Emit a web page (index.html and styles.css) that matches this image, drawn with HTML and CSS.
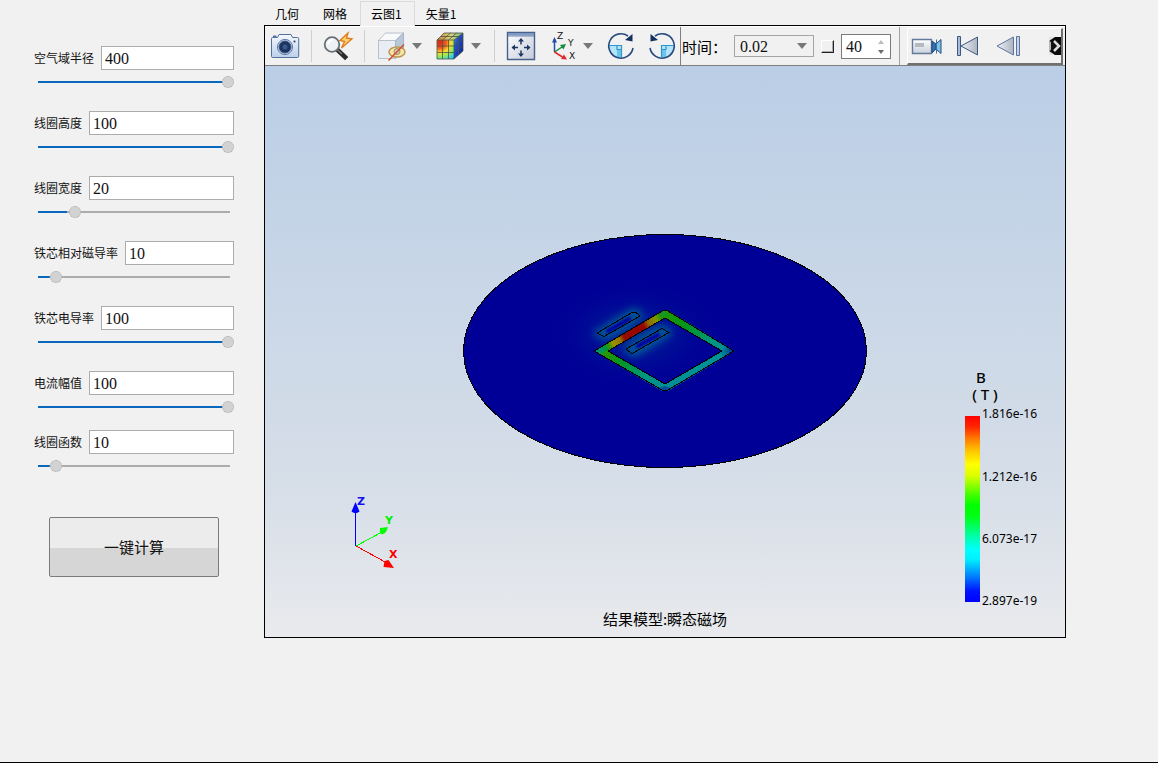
FILE: index.html
```html
<!DOCTYPE html>
<html lang="zh-CN">
<head>
<meta charset="utf-8">
<title>瞬态磁场</title>
<link rel="stylesheet" href="styles.css">
</head>
<body>
<div class="app">
  <form class="params">
    <div class="param">
      <div class="row"><label for="p1">空气域半径</label><input class="value" id="p1" type="text" value="400"></div>
      <input class="slider" type="range" aria-label="空气域半径" min="4" max="400" value="400" style="--fill:100%">
    </div>
    <div class="param">
      <div class="row"><label for="p2">线圈高度</label><input class="value" id="p2" type="text" value="100"></div>
      <input class="slider" type="range" aria-label="线圈高度" min="4" max="100" value="100" style="--fill:100%">
    </div>
    <div class="param">
      <div class="row"><label for="p3">线圈宽度</label><input class="value" id="p3" type="text" value="20"></div>
      <input class="slider" type="range" aria-label="线圈宽度" min="4" max="100" value="20" style="--fill:17%">
    </div>
    <div class="param">
      <div class="row"><label for="p4">铁芯相对磁导率</label><input class="value" id="p4" type="text" value="10"></div>
      <input class="slider" type="range" aria-label="铁芯相对磁导率" min="4" max="100" value="10" style="--fill:8%">
    </div>
    <div class="param">
      <div class="row"><label for="p5">铁芯电导率</label><input class="value" id="p5" type="text" value="100"></div>
      <input class="slider" type="range" aria-label="铁芯电导率" min="4" max="100" value="100" style="--fill:100%">
    </div>
    <div class="param param-tight">
      <div class="row"><label for="p6">电流幅值</label><input class="value" id="p6" type="text" value="100"></div>
      <input class="slider" type="range" aria-label="电流幅值" min="4" max="100" value="100" style="--fill:100%">
    </div>
    <div class="param param-last">
      <div class="row"><label for="p7">线圈函数</label><input class="value" id="p7" type="text" value="10"></div>
      <input class="slider" type="range" aria-label="线圈函数" min="4" max="100" value="10" style="--fill:8%">
    </div>
    <button class="run" type="button">一键计算</button>
  </form>

  <main class="main">
    <nav class="tabs">
      <button class="tab" type="button">几何</button>
      <button class="tab" type="button">网格</button>
      <button class="tab active" type="button">云图1</button>
      <button class="tab" type="button">矢量1</button>
    </nav>
    <section class="viewer">
      <div class="toolbar">
        <div class="group">
          <button class="tool" type="button" aria-label="截图">
            <svg viewBox="0 0 32 32">
              <defs><linearGradient id="cam" x2="0" y2="1"><stop offset="0" stop-color="#f4f8fd"/><stop offset="1" stop-color="#bcd0ea"/></linearGradient></defs>
              <path d="M3.500 7.500h5l1.500-3h12l1.500 3h5q1.200 0 1.200 1.200v17.600q0 1.200-1.200 1.200H3.700q-1.200 0-1.200-1.200V8.700q0-1.200 1-1.200z" fill="url(#cam)" stroke="#54709c"/>
              <path d="M4 7h3.500V5.500H4z" fill="#54709c"/>
              <circle cx="16" cy="17" r="7.600" fill="#c9daf0" stroke="#607ba6"/>
              <circle cx="16" cy="17" r="6" fill="#1e3560" stroke="#3c5888"/>
              <circle cx="16" cy="17" r="2.500" fill="#3a598c"/>
              <circle cx="25.500" cy="11.500" r="1.100" fill="#2c4673"/>
            </svg>
          </button>
        </div>
        <div class="group">
          <button class="tool" type="button" aria-label="快速查询">
            <svg viewBox="0 0 32 32">
              <path d="M15.500 20l7.500 7" stroke="#2a2a2a" stroke-width="4.600" stroke-linecap="square"/>
              <path d="M14 18.500l6 5.500" stroke="#777" stroke-width="1.500"/>
              <circle cx="10" cy="14.500" r="7.300" fill="#eef2f6" stroke="#6a7078" stroke-width="1.800"/>
              <path d="M6 14q1-4 5-4.500" fill="none" stroke="#fff" stroke-width="2"/>
              <path d="M26 3l-8 7.500 4.500 1-3 6.500L30 9l-5.500-1z" fill="#fbd070" stroke="#e07a1c" stroke-width="1.300"/>
            </svg>
          </button>
        </div>
        <div class="group">
          <div class="combo">
            <button class="tool" type="button" aria-label="显示隐藏">
              <svg viewBox="0 0 32 32">
                <path d="M3.500 10.500h17v18h-17z" fill="#e9eef5" stroke="#b9c0ca"/>
                <path d="M3.500 10.500l7-7.500h18l-8 7.500z" fill="#f7f9fb" stroke="#b9c0ca"/>
                <path d="M20.500 10.500l8-7.500v16l-8 9.500z" fill="#b9c8d6" stroke="#a5b4c4"/>
                <ellipse cx="22" cy="22" rx="8" ry="5" fill="#f9e3a6" stroke="#b9974f" stroke-width="1.500"/>
                <circle cx="22" cy="21.500" r="3" fill="#d6ccae" stroke="#9a8a60"/>
                <path d="M13.500 30.500L29 14.500" stroke="#cf4d2e" stroke-width="1.500"/>
              </svg>
            </button>
            <button class="drop" type="button" aria-label="更多显示选项"></button>
          </div>
          <div class="combo">
            <button class="tool" type="button" aria-label="云图">
              <svg viewBox="0 0 32 32">
                <defs>
                  <radialGradient id="hot" gradientUnits="userSpaceOnUse" cx="6" cy="12" r="22"><stop offset="0" stop-color="#dc2418"/><stop offset=".28" stop-color="#f05a20"/><stop offset=".48" stop-color="#fadc30"/><stop offset=".68" stop-color="#8ae860"/><stop offset=".85" stop-color="#30d0e8"/><stop offset="1" stop-color="#20a0f0"/></radialGradient>
                  <linearGradient id="side" x2="1" y2="1"><stop offset="0" stop-color="#50c0a0"/><stop offset=".3" stop-color="#1e58d0"/><stop offset="1" stop-color="#0810a0"/></linearGradient>
                  <linearGradient id="roof" x2="1"><stop offset="0" stop-color="#c87838"/><stop offset=".5" stop-color="#dcd478"/><stop offset="1" stop-color="#68b888"/></linearGradient>
                </defs>
                <path d="M3 10h17v19H3z" fill="url(#hot)"/>
                <path d="M3 10l7-7h19l-9 7z" fill="url(#roof)"/>
                <path d="M20 10l9-7v18l-9 8z" fill="url(#side)"/>
                <path d="M3 10h17v19H3zM3 10l7-7h19M29 3v18l-9 8M20 10l9-7M8.500 10v19M14.500 10v19M3 16h17l9-7M3 22.500h17l9-7M8.500 10l8-7M14.500 10l8-7M7 6.500h17.500v18" fill="none" stroke="#4c5440" stroke-width=".8"/>
              </svg>
            </button>
            <button class="drop" type="button" aria-label="更多云图选项"></button>
          </div>
        </div>
        <div class="group group-end">
          <button class="tool" type="button" aria-label="适应窗口">
            <svg viewBox="0 0 32 32">
              <defs><linearGradient id="fit" x2="1" y2="1"><stop offset="0" stop-color="#fff"/><stop offset="1" stop-color="#c3cad8"/></linearGradient></defs>
              <path d="M2.500 2.500h27v27h-27z" fill="url(#fit)" stroke="#48608c" stroke-width="1.400"/>
              <path d="M3 3h26v2.500H3z" fill="#7d98c4"/><path d="M3 6h26" stroke="#6c84ac"/>
              <path d="M16 9v5.500M16 20.500V26M7.500 17.500H13M19 17.500h5.500" stroke="#1d3765" stroke-width="1.500"/>
              <path d="M16 8l-3 3.500h6zM16 27l-3-3.500h6zM6.500 17.500l3.500-3v6zM25.500 17.500l-3.500-3v6z" fill="#1d3765"/>
            </svg>
          </button>
          <div class="combo">
            <button class="tool" type="button" aria-label="坐标视图">
              <svg viewBox="0 0 32 32">
                <path d="M8.500 22V9" stroke="#2450a8" stroke-width="1.500"/><path d="M8.500 7L6 12.500h5z" fill="#2450a8"/>
                <path d="M8.500 22l9-6" stroke="#168c3c" stroke-width="1.500"/><path d="M20 14l-6 1 3.500 4.500z" fill="#168c3c"/>
                <path d="M8.500 22l8 5" stroke="#e02828" stroke-width="1.500"/><path d="M21 29.500l-6-.500 3-4.500z" fill="#e02828"/>
                <text class="axis-tag" x="11" y="9">Z</text><text class="axis-tag" x="22" y="16">Y</text><text class="axis-tag" x="23" y="29">X</text>
              </svg>
            </button>
            <button class="drop" type="button" aria-label="更多视图"></button>
          </div>
          <button class="tool" type="button" aria-label="顺时针旋转">
            <svg viewBox="0 0 32 32">
              <path d="M4 15.500h12v12.500A12 12 0 0 1 4 15.500z" fill="#b4e4fa"/><path d="M12 19.500h4V28l-4-1z" fill="#6cc4ec"/>
              <path d="M28 18A12.200 12.200 0 1 1 23 6" fill="none" stroke="#294a7c" stroke-width="1.600"/>
              <path d="M4 15.500h12.500V28M12 15.500v4h4" fill="none" stroke="#3196cc" stroke-width="1.200"/>
              <path d="M27.500 4v7.500l-7.500-1.500z" fill="#14305e"/>
            </svg>
          </button>
          <button class="tool" type="button" aria-label="逆时针旋转">
            <svg viewBox="0 0 32 32">
              <path d="M28 15.500H16v12.500a12 12 0 0 0 12-12.500z" fill="#b4e4fa"/><path d="M20 19.500h-4V28l4-1z" fill="#6cc4ec"/>
              <path d="M4 18A12.200 12.200 0 1 0 9 6" fill="none" stroke="#294a7c" stroke-width="1.600"/>
              <path d="M28 15.500H15.500V28M20 15.500v4h-4" fill="none" stroke="#3196cc" stroke-width="1.200"/>
              <path d="M4.500 4v7.500l7.500-1.500z" fill="#14305e"/>
            </svg>
          </button>
        </div>
        <div class="time">
          <label class="time-label" for="time">时间：</label>
          <span class="select-wrap"><select class="time-select" id="time"><option>0.02</option></select></span>
          <input class="check" type="checkbox" aria-label="循环">
          <span class="spin">
            <input class="spin-input" type="number" aria-label="帧数" value="40">
            <svg class="spin-arrows" viewBox="0 0 8 14"><path d="M1 4h6L4 0z" fill="#bcbcbc"/><path d="M1 10h6l-3 4z" fill="#6c6c6c"/></svg>
          </span>
        </div>
        <div class="playback">
          <button class="tool" type="button" aria-label="录制">
            <svg viewBox="0 0 32 32">
              <defs><linearGradient id="vid" x2="0" y2="1"><stop offset="0" stop-color="#fff"/><stop offset="1" stop-color="#c8d0dc"/></linearGradient></defs>
              <path d="M1.500 9.500h19v14h-19z" fill="url(#vid)" stroke="#64799c" stroke-width="1.400"/><path d="M4 13h9v4H4z" fill="#b5b9c0"/>
              <path d="M21 11l4 3v5l-4 4z" fill="#2d74b4" stroke="#254a7b"/><path d="M30 9.500v14l-4.500-4v-6z" fill="#7ac4ea" stroke="#254a7b"/><path d="M25.500 9.500v14" stroke="#4a6a98"/>
            </svg>
          </button>
          <button class="tool" type="button" aria-label="首帧">
            <svg viewBox="0 0 32 32">
              <defs><linearGradient id="tri" x2="1"><stop offset="0" stop-color="#eef2f7"/><stop offset="1" stop-color="#adb4c0"/></linearGradient></defs>
              <path d="M5.500 6.500h3v19h-3z" fill="#a8bcd8" stroke="#3c5784"/><path d="M25.500 7v18L9 16z" fill="url(#tri)" stroke="#3c5784"/>
            </svg>
          </button>
          <button class="tool" type="button" aria-label="上一帧">
            <svg viewBox="0 0 32 32">
              <path d="M20.500 7v18L4 16z" fill="url(#tri)" stroke="#5a759f"/><path d="M23.500 6.500h3v19h-3z" fill="#c5d2e5" stroke="#5a759f"/>
            </svg>
          </button>
          <button class="more" type="button" aria-label="更多工具">
            <svg viewBox="0 0 12 18"><path d="M0 0h12v18H0z" fill="#0a0a0a"/><path d="M0 3l5 6-5 6z" fill="#b4b4b4"/><path d="M0 0h6L0 4zM0 18h6l-6-4z" fill="#e4e4e4"/><path d="M5 4l5 5-5 5" fill="none" stroke="#ddd" stroke-width="2.500"/><path d="M2 5l5 4-5 4z" fill="#111"/></svg>
          </button>
        </div>
      </div>

      <svg class="scene" viewBox="0 0 800 571" role="img" aria-label="结果模型:瞬态磁场">
        <defs>
          <radialGradient id="field"><stop offset="0" stop-color="#004496"/><stop offset=".35" stop-color="#002296" stop-opacity=".8"/><stop offset="1" stop-color="#000096" stop-opacity="0"/></radialGradient>
          <linearGradient id="nw" gradientUnits="userSpaceOnUse" x1="332" y1="285" x2="402" y2="246"><stop offset="0" stop-color="#009090"/><stop offset=".12" stop-color="#009630"/><stop offset=".17" stop-color="#3c9600"/><stop offset=".22" stop-color="#969600"/><stop offset=".32" stop-color="#967800"/><stop offset=".38" stop-color="#960a00"/><stop offset=".66" stop-color="#960500"/><stop offset=".73" stop-color="#966400"/><stop offset=".83" stop-color="#829600"/><stop offset=".91" stop-color="#1e9600"/><stop offset="1" stop-color="#009678"/></linearGradient>
          <linearGradient id="ne" gradientUnits="userSpaceOnUse" x1="400" y1="248" x2="469" y2="286"><stop offset="0" stop-color="#1e9600"/><stop offset=".32" stop-color="#009620"/><stop offset=".65" stop-color="#009678"/><stop offset=".85" stop-color="#009096"/><stop offset="1" stop-color="#001a96"/></linearGradient>
          <linearGradient id="sw" gradientUnits="userSpaceOnUse" x1="334" y1="284" x2="400" y2="322"><stop offset="0" stop-color="#009678"/><stop offset=".1" stop-color="#289600"/><stop offset=".35" stop-color="#009628"/><stop offset=".7" stop-color="#009682"/><stop offset="1" stop-color="#009096"/></linearGradient>
          <linearGradient id="se" gradientUnits="userSpaceOnUse" x1="400" y1="322" x2="471" y2="285"><stop offset="0" stop-color="#009096"/><stop offset=".8" stop-color="#009296"/><stop offset="1" stop-color="#002896"/></linearGradient>
          <linearGradient id="scale" x2="0" y2="1"><stop offset="0" stop-color="#f00"/><stop offset=".06" stop-color="#ff2800"/><stop offset=".12" stop-color="#ff7800"/><stop offset=".19" stop-color="#ffc800"/><stop offset=".26" stop-color="#ff0"/><stop offset=".32" stop-color="#dcff00"/><stop offset=".42" stop-color="#46ff00"/><stop offset=".48" stop-color="#0f0"/><stop offset=".54" stop-color="#00ff14"/><stop offset=".64" stop-color="#00ffa0"/><stop offset=".72" stop-color="#0ff"/><stop offset=".77" stop-color="#00f0ff"/><stop offset=".86" stop-color="#0082ff"/><stop offset=".94" stop-color="#0014ff"/><stop offset="1" stop-color="#00f"/></linearGradient>
          <filter id="soft" x="-50%" y="-50%" width="200%" height="200%"><feGaussianBlur stdDeviation="4"/></filter>
          <filter id="core" x="-20%" y="-20%" width="140%" height="140%"><feGaussianBlur stdDeviation="1.200"/></filter>
        </defs>
        <ellipse class="edge" cx="400" cy="285" rx="201.500" ry="116.500" fill="#000096"/>
        <ellipse cx="370" cy="268" rx="88" ry="54" fill="url(#field)" opacity=".75"/>
        <g filter="url(#soft)" fill="#007896" opacity=".8">
          <path d="M327 268l42-26 11 7-40 25z"/>
          <path d="M358 284l39-25 12 7-40 25z"/>
        </g>
        <g filter="url(#core)" fill="#004c96">
          <path d="M332 267l35-20.500h4l4 3.500-36 20.500z"/>
          <path d="M361 283l36-20.500 7 4-36 20.500h-2z"/>
        </g>
        <g filter="url(#core)" stroke="#0000a0" stroke-width="4" stroke-linecap="round"><path d="M343 265l21-12"/><path d="M373 280l20-11"/></g>
        <path class="edge" fill="none" d="M332 267l35-20.500h4l4 3.500-36 20.500z"/>
        <path class="edge" fill="none" d="M361 283l36-20.500 7 4-36 20.500h-2z"/>
        <path d="M329 285l69-40h4l-2 7-57 33z" fill="url(#nw)"/>
        <path d="M400 244h2l68 41h-13l-57-33z" fill="url(#ne)"/>
        <path d="M329 285h14l57 33v7h-3z" fill="url(#sw)"/>
        <path d="M470 285h-13l-57 33v7h3z" fill="url(#se)"/>
        <path d="M394 322l6-2 6 2-4 3h-4z" fill="#002896" opacity=".6"/>
        <path class="edge" fill="none" d="M329 285l69-40.500h4l67 40.500-67 39.500h-4zM343 285l57-33 57 33-57 33z"/>

        <path d="M90.500 480V446" stroke="#00f" class="crisp"/><path d="M90.500 436l4 9.500q-4 3.500-8 0z" fill="#00f"/>
        <path d="M91 480l26-14" stroke="#0f0" class="crisp"/><path d="M115 462l8-1-2 5q-4 4-6 1z" fill="#0f0"/>
        <path d="M91 480l31 17" stroke="#f00" class="crisp"/><path d="M118.500 501l1-6 4-1 5.500 8z" fill="#f00"/>
        <text class="axis" x="92" y="439" fill="#1010f0">Z</text>
        <text class="axis" x="120" y="458" fill="#00f000">Y</text>
        <text class="axis" x="124" y="492" fill="#f00">X</text>

        <text class="caption" x="400" y="559">结果模型:瞬态磁场</text>
        <text class="caption quantity"><tspan x="716" y="317">B</tspan><tspan x="720" y="334">( T )</tspan></text>
        <rect x="700" y="350" width="15" height="186" fill="url(#scale)"/>
        <g class="ticks"><text x="717" y="352">1.816e-16</text><text x="717" y="415">1.212e-16</text><text x="717" y="477">6.073e-17</text><text x="717" y="539">2.897e-19</text></g>
      </svg>
    </section>
  </main>
</div>
</body>
</html>
```

FILE: styles.css
```css
* { box-sizing: border-box; }

body {
  margin: 0;
  background: #f1f1f1;
  color: #111;
  font-family: "Noto Sans CJK SC", sans-serif;
  font-size: 12px;
}

button, input, select { margin: 0; color: inherit; font-family: inherit; }

.app {
  display: flex;
  min-height: 100vh;
  border-bottom: 1px solid #000;
}

/* Parameter column */
.params {
  flex: none;
  display: flex;
  flex-direction: column;
  width: 264px;
  padding: 46px 30px 0 34px;
}
.param {
  display: flex;
  flex-direction: column;
  gap: 6px;
  margin-bottom: 23px;
}
.param-tight { margin-bottom: 17px; }
.param-last { margin-bottom: 45px; }
.row { display: flex; align-items: center; gap: 7px; }
.row label { flex: none; line-height: 24px; }
.value {
  flex: 1;
  min-width: 0;
  height: 24px;
  padding: 2px 3px 0;
  border: 1px solid #acacac;
  background: #fff;
  font-family: "Liberation Serif", serif;
  font-size: 16px;
}
.slider {
  appearance: none;
  height: 12px;
  margin-left: 4px;
  background:
    linear-gradient(#0a68bc, #0a68bc) 0 5px / calc(var(--fill) - 4px) 2px no-repeat,
    linear-gradient(#acacac, #acacac) 0 5px / calc(100% - 4px) 2px no-repeat;
}
.slider::-webkit-slider-thumb {
  appearance: none;
  width: 12px;
  height: 12px;
  border: 1px dotted #aaa;
  border-radius: 50%;
  background: #d2d2d2;
}
.run {
  width: 170px;
  height: 60px;
  margin-left: 15px;
  padding: 0 0 2px;
  border: 1px solid #7b7b7b;
  border-radius: 2px;
  background: linear-gradient(#ececec 51%, #d6d6d6 51%);
  font-size: 15px;
}

/* Result viewer */
.main { flex: 1; min-width: 0; margin-right: 92px; }
.tabs { display: flex; height: 25px; padding-top: 1px; }
.tab {
  height: 24px;
  padding: 0 12px 0 10px;
  border: 1px solid transparent;
  border-bottom: 0;
  background: none;
  color: #000;
  font-size: 12px;
  line-height: 22px;
}
.tab.active {
  z-index: 1;
  height: 25px;
  border-color: #dadada;
  background: #f1f1f1;
}
.viewer {
  border: 1px solid #000;
  background: linear-gradient(#bacee6 40px, #d6dee8 75%, #e9eaed);
}
.toolbar {
  display: flex;
  align-items: center;
  height: 40px;
  overflow: hidden;
  border-top: 1px solid #fff;
  border-bottom: 1px solid #7e7e7e;
  background: #f1f1f1;
}
.group {
  flex: none;
  display: flex;
  align-items: center;
  gap: 9px;
  height: 32px;
  padding: 0 10px;
  border-right: 1px solid #cfcfcf;
}
.group:first-child { padding-left: 4px; }
.group-end { height: 40px; padding-right: 2px; border-color: #7e7e7e; }
.combo { display: flex; gap: 2px; }
.tool {
  flex: none;
  width: 32px;
  height: 32px;
  padding: 0;
  border: 0;
  background: none;
}
.tool svg, .more svg, .scene { display: block; width: 100%; height: auto; }
.tool svg { overflow: visible; }
.axis-tag { font: 9px "DejaVu Sans", sans-serif; fill: #111; }
.drop {
  display: flex;
  align-items: center;
  justify-content: center;
  width: 16px;
  padding: 0;
  border: 0;
  background: none;
}
.drop::after, .select-wrap::after {
  content: "";
  border: 5px solid transparent;
  border-top: 6px solid #787878;
  border-bottom: 0;
}
.time {
  flex: none;
  display: flex;
  align-items: center;
  gap: 7px;
  height: 40px;
  padding: 0 8px 0 1px;
  border-right: 1px solid #a0a0a0;
}
.time-label { font-size: 15px; color: #000; }
.select-wrap { position: relative; display: flex; }
.select-wrap::after { position: absolute; top: 8px; right: 7px; pointer-events: none; }
.time-select {
  appearance: none;
  width: 80px;
  height: 22px;
  padding: 0 5px;
  border: 1px solid #a5a5a5;
  border-radius: 0;
  background: #f1f1f1;
  font-family: "Liberation Serif", serif;
  font-size: 16px;
}
.check {
  appearance: none;
  width: 13px;
  height: 13px;
  border: 1px solid #222;
  border-top-color: #fff;
  border-left-color: #fff;
  box-shadow: inset -1px -1px #aaa;
}
.spin { position: relative; display: flex; }
.spin-input {
  appearance: textfield;
  width: 50px;
  height: 25px;
  padding: 2px 4px 0;
  border: 1px solid #7a7a7a;
  background: #fff;
  font-family: "Liberation Serif", serif;
  font-size: 16px;
}
.spin-input::-webkit-inner-spin-button { appearance: none; }
.spin-arrows { position: absolute; top: 6px; right: 6px; width: 8px; height: 14px; }
.playback {
  flex: 1;
  display: flex;
  align-items: center;
  gap: 9px;
  min-width: 0;
  height: 37px;
  margin: 0 2px 0 7px;
  padding-left: 3px;
  border: 1px solid #fff;
  border-right: 2px solid #707070;
  border-bottom: 2px solid #707070;
}
.more {
  flex: none;
  width: 12px;
  margin-left: auto;
  padding: 0;
  border: 0;
  background: none;
}

/* Contour plot */
.edge { stroke: #000; stroke-width: 1; shape-rendering: crispEdges; }
.crisp { shape-rendering: crispEdges; }
.axis { font: bold 11px "DejaVu Sans", sans-serif; }
.caption { font-size: 15px; text-anchor: middle; }
.quantity { font-family: "Noto Sans", sans-serif; font-weight: 500; }
.ticks { font: 12px "Noto Sans", sans-serif; }
```
